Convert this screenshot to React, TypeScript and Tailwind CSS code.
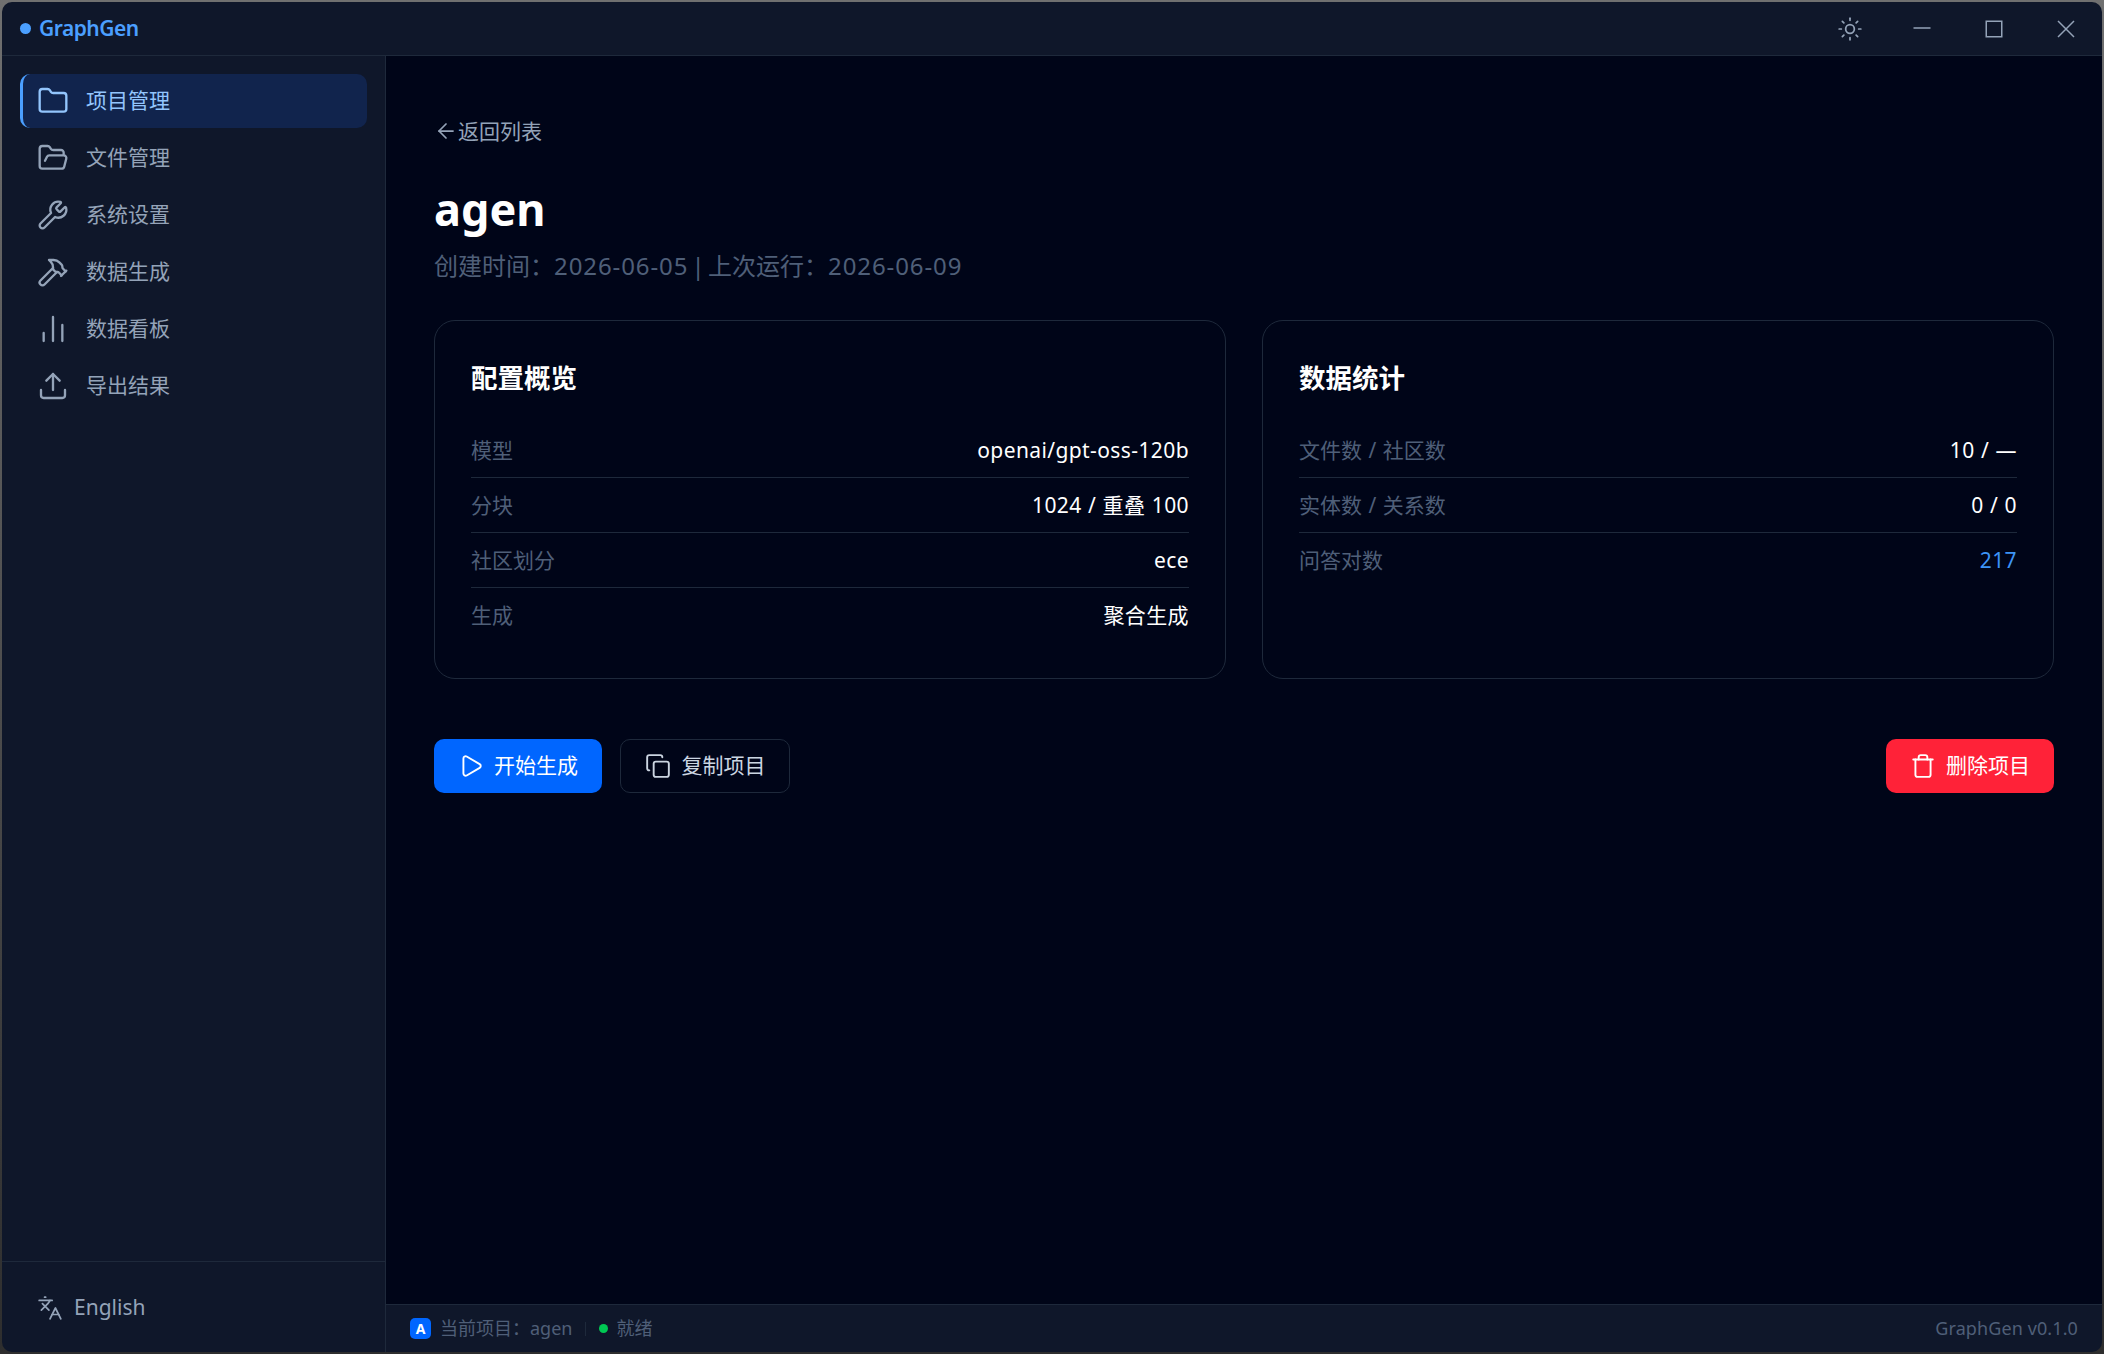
import { ArrowLeft, Copy, Folder, FolderOpen, Hammer, Languages, Play, Sun, Trash, Upload, Wrench, ChartNoAxesColumn } from "lucide-react";

const navItems = [
  { label: "项目管理", Icon: Folder, active: true },
  { label: "文件管理", Icon: FolderOpen, active: false },
  { label: "系统设置", Icon: Wrench, active: false },
  { label: "数据生成", Icon: Hammer, active: false },
  { label: "数据看板", Icon: ChartNoAxesColumn, active: false },
  { label: "导出结果", Icon: Upload, active: false },
];

const configRows = [
  ["模型", "openai/gpt-oss-120b"],
  ["分块", "1024 / 重叠 100"],
  ["社区划分", "ece"],
  ["生成", "聚合生成"],
];

const statRows = [
  ["文件数 / 社区数", "10 / —"],
  ["实体数 / 关系数", "0 / 0"],
  ["问答对数", "217"],
];

function Card({ title, rows, accentLast }: { title: string; rows: string[][]; accentLast?: boolean }) {
  return (
    <div className="h-[359px] rounded-[21px] border border-[#1e293b] px-[36px] pt-[36px]">
      <h2 className="mb-[24px] text-[26.5px] leading-[42px] font-bold text-white">{title}</h2>
      <div>
        {rows.map(([k, v], i) => (
          <div
            key={k}
            className={`flex h-[55px] items-center justify-between pt-[1px] ${i < rows.length - 1 ? "border-b border-[#1e293b]" : ""}`}
          >
            <span className="text-[21px] text-[#4f5f78] [word-spacing:1px]">{k}</span>
            <span className={`text-[21px] tracking-[0.4px] [word-spacing:0.5px] ${accentLast && i === rows.length - 1 ? "text-[#3d94f6]" : "text-white"}`}>{v}</span>
          </div>
        ))}
      </div>
    </div>
  );
}

function WinIcon({ kind }: { kind: "min" | "max" | "close" }) {
  return (
    <svg width="20" height="20" viewBox="0 0 20 20" fill="none" stroke="currentColor" strokeWidth="1.5">
      {kind === "min" && <path d="M1.5 9h17" />}
      {kind === "max" && <rect x="2.25" y="2.25" width="15.5" height="15.5" />}
      {kind === "close" && <path d="M2 2l16 16M18 2L2 18" />}
    </svg>
  );
}

export default function App() {
  return (
    <div className="h-[1354px] w-[2104px] overflow-hidden bg-linear-to-b from-[#707070] to-[#2e2e2e] p-[2px] font-['Noto_Sans','Noto_Sans_CJK_SC',sans-serif]">
      <div className="flex h-full flex-col overflow-hidden rounded-[10px] bg-[#0f172a]">
        <header className="flex h-[54px] shrink-0 items-center justify-between border-b border-[#1e293b] pl-[18px]">
          <div className="flex items-center gap-[8px]">
            <span className="size-[11px] rounded-full bg-[#4b9fff]" />
            <span className="text-[21px] font-semibold tracking-[-0.5px] text-[#4b9fff]">GraphGen</span>
          </div>
          <div className="flex items-center text-[#94a3b8]">
            <button className="flex h-[53px] w-[72px] items-center justify-center"><Sun size={26} strokeWidth={1.6} /></button>
            <button className="flex h-[53px] w-[72px] items-center justify-center"><WinIcon kind="min" /></button>
            <button className="flex h-[53px] w-[72px] items-center justify-center"><WinIcon kind="max" /></button>
            <button className="flex h-[53px] w-[72px] items-center justify-center"><WinIcon kind="close" /></button>
          </div>
        </header>
        <div className="flex min-h-0 flex-1">
          <aside className="flex w-[384px] shrink-0 flex-col border-r border-[#1e293b]">
            <nav className="flex flex-1 flex-col gap-[3px] pt-[18px] pr-[18px] pl-[18px]">
              {navItems.map(({ label, Icon, active }) => (
                <div
                  key={label}
                  className={
                    active
                      ? "flex h-[54px] items-center gap-[17px] rounded-[10px] border-l-[3px] border-[#4b9fff] bg-[#11244d] pl-[14px] text-[21px] text-[#93c5fd]"
                      : "flex h-[54px] items-center gap-[17px] rounded-[10px] pl-[17px] text-[21px] text-[#94a3b8]"
                  }
                >
                  <Icon size={32} strokeWidth={1.75} />
                  <span>{label}</span>
                </div>
              ))}
            </nav>
            <div className="flex h-[91px] items-center gap-[11px] border-t border-[#1e293b] pt-[2px] pl-[35px] text-[21px] text-[#94a3b8]">
              <Languages size={26} strokeWidth={1.6} />
              <span>English</span>
            </div>
          </aside>
          <div className="flex min-w-0 flex-1 flex-col">
            <main className="min-h-0 flex-1 bg-[#000518] px-[48px] pt-[59px]">
              <a className="flex items-center text-[21px] leading-[32px] text-[#94a3b8]">
                <ArrowLeft size={24} strokeWidth={1.75} />
                返回列表
              </a>
              <h1 className="mt-[36px] text-[45px] leading-[52px] font-bold text-white">agen</h1>
              <p className="mt-[13px] text-[24px] leading-[36px] text-[#4f5f78]">
                <span>创建时间：</span>
                <span className="tracking-[0.9px]">2026-06-05</span>
                <span className="mx-[-3px]"> | </span>
                <span>上次运行：</span>
                <span className="tracking-[0.9px]">2026-06-09</span>
              </p>
              <div className="mt-[36px] grid grid-cols-2 gap-[36px]">
                <Card title="配置概览" rows={configRows} />
                <Card title="数据统计" rows={statRows} accentLast />
              </div>
              <div className="mt-[60px] flex items-center justify-between">
                <div className="flex items-center gap-[18px]">
                  <button className="flex h-[54px] w-[168px] items-center justify-center gap-[10px] rounded-[10px] bg-[#0066ff] text-[21px] text-white">
                    <Play size={26} strokeWidth={1.75} />
                    开始生成
                  </button>
                  <button className="flex h-[54px] w-[170px] items-center justify-center gap-[11px] rounded-[10px] border border-[#1e293b] text-[21px] text-[#cbd5e1]">
                    <Copy size={26} strokeWidth={1.75} />
                    复制项目
                  </button>
                </div>
                <button className="flex h-[54px] w-[168px] items-center justify-center gap-[10px] rounded-[10px] bg-[#ff2238] text-[21px] text-white">
                  <Trash size={26} strokeWidth={1.75} />
                  删除项目
                </button>
              </div>
            </main>
            <footer className="flex h-[48px] shrink-0 items-center justify-between border-t border-[#1e293b] pr-[24px] pl-[24px] text-[18px] text-[#4f5f78]">
              <div className="flex items-center">
                <span className="flex size-[21px] items-center justify-center rounded-[5px] bg-[#0066ff] text-[14px] font-bold text-white">A</span>
                <span className="ml-[9px]">当前项目：agen</span>
                <span className="mx-[13px] h-[14px] w-px bg-[#1e293b]" />
                <span className="size-[9px] rounded-full bg-[#00c853]" />
                <span className="ml-[8px]">就绪</span>
              </div>
              <span className="tracking-[0.1px]">GraphGen v0.1.0</span>
            </footer>
          </div>
        </div>
      </div>
    </div>
  );
}
